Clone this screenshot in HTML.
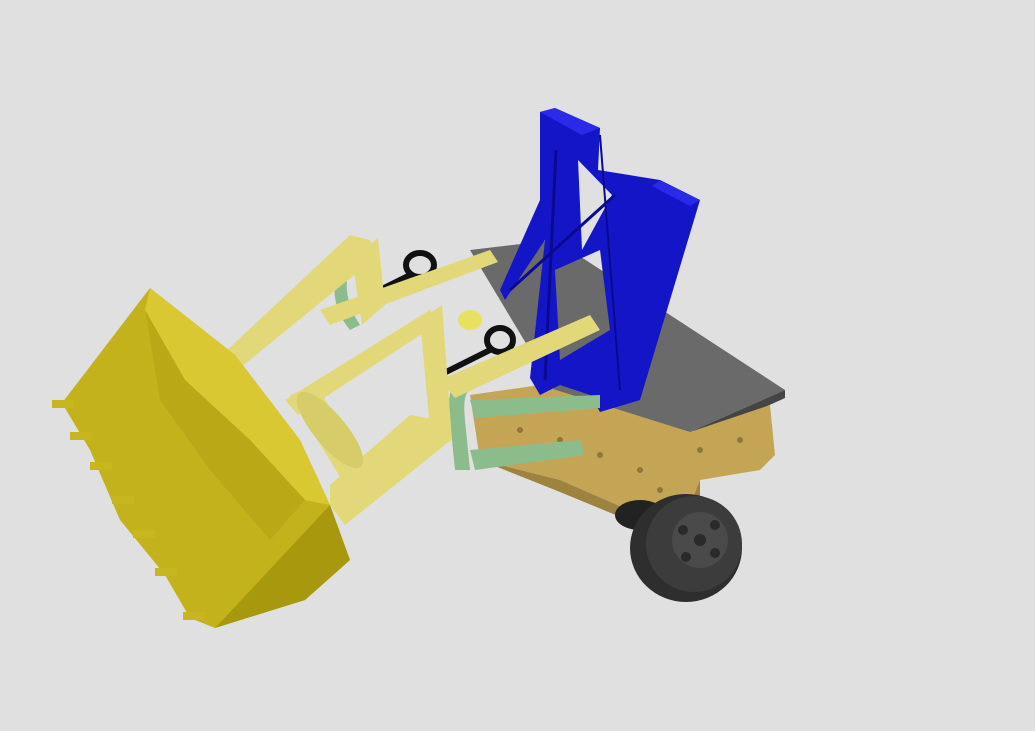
<!DOCTYPE html>
<html><head><meta charset="utf-8"><style>html,body{margin:0;padding:0;background:#e0e0e0;width:1035px;height:731px;overflow:hidden}</style></head>
<body>
<svg width="1035" height="731" viewBox="0 0 1035 731" xmlns="http://www.w3.org/2000/svg">
<rect width="1035" height="731" fill="#e0e0e0"/>
<polygon points="470,250 555,240 785,390 690,432 560,400" fill="#6a6a6a"/>
<polygon points="690,432 785,390 785,398 692,440" fill="#444"/>
<polygon points="470,395 540,385 620,410 690,432 770,405 775,455 760,470 700,480 690,505 640,515 560,480 480,460" fill="#c4a556"/>
<polygon points="480,460 560,480 640,515 690,505 700,480 700,500 640,525 560,492" fill="#9d8240"/>
<g fill="#6b5a2a" opacity="0.6">
<circle cx="560" cy="440" r="3"/><circle cx="600" cy="455" r="3"/><circle cx="640" cy="470" r="3"/><circle cx="700" cy="450" r="3"/><circle cx="740" cy="440" r="3"/><circle cx="520" cy="430" r="3"/><circle cx="660" cy="490" r="3"/>
</g>
<ellipse cx="640" cy="515" rx="25" ry="15" fill="#222"/>
<ellipse cx="686" cy="548" rx="56" ry="54" fill="#2e2e2e"/>
<ellipse cx="694" cy="544" rx="48" ry="48" fill="#3c3c3c"/>
<circle cx="700" cy="540" r="28" fill="#4a4a4a"/>
<g fill="#2a2a2a"><circle cx="700" cy="540" r="6"/><circle cx="715" cy="525" r="5"/><circle cx="683" cy="530" r="5"/><circle cx="686" cy="557" r="5"/><circle cx="715" cy="553" r="5"/></g>
<!-- blue frame -->
<path fill-rule="evenodd" fill="#1515c8" d="M540,112 L555,108 L600,128 L598,170 L660,180 L700,200 L640,400 L600,412 L590,395 L560,385 L540,395 L530,378 L545,240 L505,300 L500,290 L540,200 Z M578,160 L612,195 L582,250 Z M555,270 L600,250 L610,330 L560,360 Z"/>
<polygon points="540,112 555,108 600,128 582,135" fill="#2a2ae8"/>
<polygon points="660,180 700,200 690,206 652,186" fill="#2a2ae8"/>
<line x1="556" y1="150" x2="545" y2="380" stroke="#0a0a90" stroke-width="3"/>
<line x1="600" y1="135" x2="620" y2="390" stroke="#0a0a90" stroke-width="2"/>
<line x1="510" y1="290" x2="615" y2="195" stroke="#0a0a90" stroke-width="3"/>
<polygon points="470,400 600,395 600,408 475,418" fill="#8cbc8c"/>
<polygon points="470,450 580,440 585,455 475,470" fill="#8cbc8c"/>
<path d="M465 378 Q445 380 450 420 L455 470 L470 470 L465 420 Q462 390 472 390Z" fill="#8cbc8c"/>
<path d="M340 260 Q325 300 350 330 L360 325 Q340 295 350 265Z" fill="#8cbc8c"/>
<ellipse cx="420" cy="265" rx="14" ry="12" fill="none" stroke="#111" stroke-width="6"/>
<line x1="410" y1="275" x2="360" y2="300" stroke="#111" stroke-width="6"/>
<ellipse cx="500" cy="340" rx="13" ry="12" fill="none" stroke="#111" stroke-width="6"/>
<line x1="490" y1="350" x2="440" y2="375" stroke="#111" stroke-width="6"/>
<g fill="#e2d879">
<polygon points="225,352 350,235 370,240 375,258 240,368"/>
<polygon points="320,310 490,250 498,262 330,325"/>
<polygon points="285,400 430,310 440,322 298,415"/>
<polygon points="330,485 410,415 440,420 445,445 345,525 330,505"/>
<polygon points="440,380 590,315 600,330 455,398"/>
<polygon points="352,258 378,238 385,305 362,325"/>
<polygon points="420,320 442,305 452,440 432,452"/>
<polygon points="290,395 316,385 368,470 345,485"/>
</g>
<ellipse cx="330" cy="430" rx="16" ry="48" transform="rotate(-40 330 430)" fill="#d6cc6a"/>
<ellipse cx="470" cy="320" rx="12" ry="10" fill="#e8e060"/>
<polygon points="62,403 150,288 235,355 300,440 330,505 350,560 305,600 215,628 190,618 165,575 120,520 90,450" fill="#c4b21c"/>
<polygon points="150,288 235,355 300,440 330,505 305,500 250,440 185,380 145,310" fill="#d9c832"/>
<polygon points="330,505 350,560 305,600 215,628 260,580" fill="#a8980e"/>
<polygon points="145,310 185,380 250,440 305,500 270,540 210,470 160,400" fill="#baa816"/>
<g fill="#c8b620">
<rect x="52" y="400" width="22" height="8"/>
<rect x="70" y="432" width="22" height="8"/>
<rect x="90" y="462" width="22" height="8"/>
<rect x="112" y="496" width="22" height="8"/>
<rect x="133" y="530" width="22" height="8"/>
<rect x="155" y="568" width="22" height="8"/>
<rect x="183" y="612" width="22" height="8"/>
</g>
</svg>
</body></html>
